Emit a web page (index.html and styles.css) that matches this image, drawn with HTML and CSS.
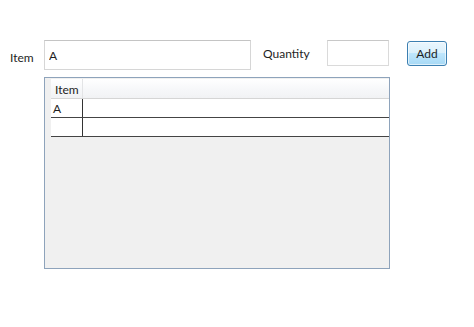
FILE: index.html
```html
<!DOCTYPE html>
<html lang="en">
<head>
  <meta charset="UTF-8">
  <meta name="viewport" content="width=device-width, initial-scale=1.0">
  <title>Items</title>
  <link rel="stylesheet" href="styles.css">
</head>
<body>
  <div class="window">
    <div class="entry">
      <label class="item-label" for="item">Item</label>
      <input class="item-input" type="text" id="item" value="A">
      <label class="qty-label" for="qty">Quantity</label>
      <input class="qty-input" type="text" id="qty">
      <button class="add-btn">Add</button>
    </div>
    <div class="grid">
      <div class="grid-head">
        <div class="col-head">Item</div>
        <div class="col-fill"></div>
      </div>
      <div class="grid-row">
        <div class="cell">A</div>
        <div class="cell-fill"></div>
      </div>
      <div class="grid-row">
        <div class="cell"></div>
        <div class="cell-fill"></div>
      </div>
    </div>
  </div>
</body>
</html>
```

FILE: styles.css
```css
body {
  margin: 0;
  padding: 0;
  background: #fff;
  font-family: Lato, "Open Sans", sans-serif;
  font-size: 12px;
  color: #1e1e1e;
}
.window {
  width: 474px;
  height: 327px;
  padding-top: 40px;
  box-sizing: border-box;
}
.entry {
  display: flex;
  align-items: flex-start;
  height: 30px;
}
.item-label {
  margin-left: 10px;
  width: 34px;
  margin-top: 10px;
}
.item-input {
  width: 207px;
  height: 30px;
  box-sizing: border-box;
  border: 1px solid #d6d6d6;
  border-top-color: #c4c4c4;
  padding: 0 4px;
  font: inherit;
  color: #1e1e1e;
  outline: none;
}
.qty-label {
  margin-left: 12px;
  width: 64px;
  margin-top: 6px;
}
.qty-input {
  width: 62px;
  height: 26px;
  box-sizing: border-box;
  border: 1px solid #dadada;
  border-top-color: #c8c8c8;
  font: inherit;
  outline: none;
}
.add-btn {
  margin-left: 18px;
  margin-top: 1px;
  width: 40px;
  height: 25px;
  border: 1px solid #3c7fb1;
  border-radius: 3px;
  background: linear-gradient(#eaf6fd, #d9f0fc 50%, #bee6fd 50%, #a7d9f5);
  box-shadow: inset 0 0 0 1px rgba(255, 255, 255, 0.6);
  font: inherit;
  color: #1e1e1e;
  padding: 0;
}
.grid {
  margin: 7px 0 0 44px;
  width: 346px;
  height: 192px;
  box-sizing: border-box;
  border: 1px solid #8ea3bb;
  background: #f0f0f0;
  padding: 1px 0 0 6px;
}
.grid-head {
  display: flex;
  height: 20px;
  background: linear-gradient(#ffffff, #f7f8fa 50%, #f1f2f4);
  border-bottom: 1px solid #d5d5d5;
  box-sizing: border-box;
}
.col-head {
  width: 32px;
  padding: 3px 0 0 4px;
  box-sizing: border-box;
  border-right: 1px solid #e3e4e6;
}
.col-fill {
  flex: 1;
}
.grid-row {
  display: flex;
  height: 19px;
  background: #fff;
  border-bottom: 1px solid #444;
  box-sizing: border-box;
}
.cell {
  width: 32px;
  padding: 2px 0 0 2px;
  box-sizing: border-box;
  border-right: 1px solid #333;
}
.cell-fill {
  flex: 1;
}
```
